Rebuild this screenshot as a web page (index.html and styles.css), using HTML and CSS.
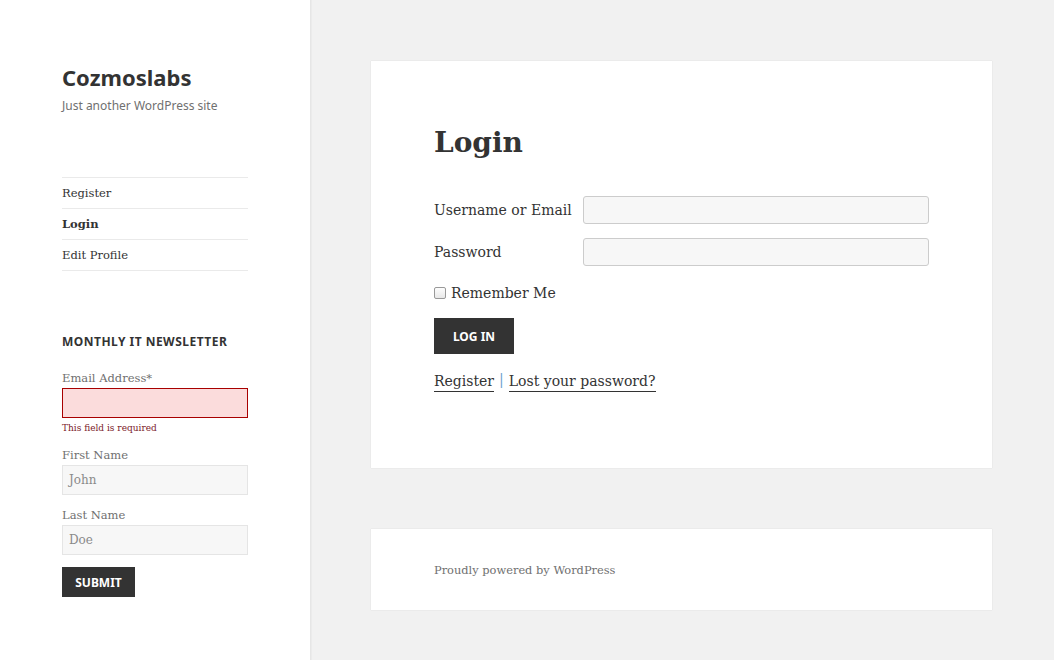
FILE: index.html
```html
<!DOCTYPE html>
<html>
<head>
<meta charset="utf-8">
<link rel="stylesheet" href="styles.css">
</head>
<body>
<div class="page">
  <aside class="sidebar">
    <div class="branding">
      <div class="site-title">Cozmoslabs</div>
      <div class="site-desc">Just another WordPress site</div>
    </div>
    <nav class="side-nav">
      <a class="nav-item">Register</a>
      <a class="nav-item current">Login</a>
      <a class="nav-item">Edit Profile</a>
    </nav>
    <section class="widget">
      <h2 class="widget-title">Monthly IT Newsletter</h2>
      <div class="field">
        <label class="field-label">Email Address*</label>
        <div class="input error"></div>
        <div class="error-msg">This field is required</div>
      </div>
      <div class="field">
        <label class="field-label">First Name</label>
        <div class="input">John</div>
      </div>
      <div class="field">
        <label class="field-label">Last Name</label>
        <div class="input">Doe</div>
      </div>
      <button class="btn btn-submit">Submit</button>
    </section>
  </aside>
  <main class="main">
    <article class="card login-card">
      <h1 class="entry-title">Login</h1>
      <div class="login-row">
        <label class="login-label">Username or Email</label>
        <div class="login-input"></div>
      </div>
      <div class="login-row">
        <label class="login-label">Password</label>
        <div class="login-input"></div>
      </div>
      <div class="remember">
        <span class="checkbox"></span>
        <span>Remember Me</span>
      </div>
      <button class="btn btn-login">Log In</button>
      <div class="login-links">
        <a class="ul-link">Register</a>
        <span class="sep">|</span>
        <a class="ul-link">Lost your password?</a>
      </div>
    </article>
    <footer class="card footer-card">
      <span class="powered">Proudly powered by WordPress</span>
    </footer>
  </main>
</div>
</body>
</html>
```
FILE: styles.css
```css
* { box-sizing: border-box; }
html, body { margin: 0; padding: 0; }
body {
  background: #f1f1f1;
  font-family: "DejaVu Serif", serif;
  color: #333333;
  width: 1054px;
  height: 660px;
  overflow: hidden;
}
.page {
  display: flex;
  height: 660px;
}
.sidebar {
  width: 311px;
  flex: none;
  background: #ffffff;
  box-shadow: 0 0 1px rgba(0,0,0,0.15);
  border-right: 1px solid #e6e6e6;
  padding: 62px 62px 0 62px;
}
.site-title {
  font-family: "Noto Sans", sans-serif;
  font-weight: 700;
  font-size: 22px;
  line-height: 30px;
  color: #333333;
}
.site-desc {
  font-family: "Noto Sans", sans-serif;
  font-size: 12px;
  line-height: 16px;
  color: #707070;
  margin-top: 6px;
}
.side-nav {
  margin-top: 63px;
  display: flex;
  flex-direction: column;
  border-top: 1px solid #eaeaea;
}
.nav-item {
  display: block;
  height: 31px;
  line-height: 30px;
  font-size: 11.5px;
  color: #333333;
  border-bottom: 1px solid #eaeaea;
  text-decoration: none;
}
.nav-item.current { font-weight: 700; }
.widget { margin-top: 63px; }
.widget-title {
  font-family: "Noto Sans", sans-serif;
  font-weight: 700;
  font-size: 12px;
  letter-spacing: 0.04em;
  text-transform: uppercase;
  margin: 0 0 20px 0;
  line-height: 16px;
}
.field { margin-bottom: 12px; }
.field-label {
  display: block;
  font-size: 11.5px;
  line-height: 16px;
  color: #707070;
  margin-bottom: 2px;
}
.input {
  height: 30px;
  background: #f7f7f7;
  border: 1px solid #e5e5e5;
  font-size: 12px;
  line-height: 28px;
  padding-left: 6px;
  color: #8a8a8a;
}
.input.error {
  background: #fbdcdc;
  border-color: #a80000;
}
.error-msg {
  font-size: 9px;
  color: #7b1a2a;
  margin-top: 3px;
  line-height: 14px;
}
.btn {
  display: block;
  border: none;
  background: #333333;
  color: #ffffff;
  font-family: "Noto Sans", sans-serif;
  font-weight: 700;
  text-transform: uppercase;
  font-size: 12px;
  padding: 0;
}
.btn-submit {
  width: 73px;
  height: 30px;
  margin-top: 1px;
}
.main {
  flex: 1;
  padding: 61px 0 0 60px;
  display: flex;
  flex-direction: column;
}
.card {
  width: 621px;
  background: #ffffff;
  box-shadow: 0 0 1px rgba(0,0,0,0.15);
}
.login-card {
  height: 407px;
  padding: 63px 63px 0 63px;
}
.entry-title {
  font-size: 28px;
  font-weight: 700;
  margin: 0 0 34px 0;
  line-height: 38px;
}
.login-row {
  display: flex;
  align-items: center;
  height: 28px;
  margin-bottom: 14px;
}
.login-label {
  width: 149px;
  flex: none;
  font-size: 14px;
}
.login-input {
  width: 346px;
  height: 28px;
  background: #f7f7f7;
  border: 1px solid #cccccc;
  border-radius: 3px;
}
.remember {
  display: flex;
  align-items: center;
  font-size: 14px;
  margin-top: 13px;
  height: 26px;
}
.checkbox {
  width: 12px;
  height: 12px;
  border: 1px solid #999;
  border-radius: 2px;
  background: linear-gradient(#fdfdfd, #e8e8e8);
  margin-right: 5px;
}
.btn-login {
  width: 80px;
  height: 36px;
  margin-top: 12px;
}
.login-links {
  margin-top: 17px;
  font-size: 14px;
  display: flex;
  gap: 5px;
}
.ul-link {
  color: #333333;
  border-bottom: 1px solid #333333;
  text-decoration: none;
  line-height: 20px;
}
.sep { color: #6aa0cf; }
.footer-card {
  margin-top: 61px;
  height: 81px;
  padding: 0 63px;
  display: flex;
  align-items: center;
}
.powered {
  font-size: 11.4px;
  color: #707070;
}
```
